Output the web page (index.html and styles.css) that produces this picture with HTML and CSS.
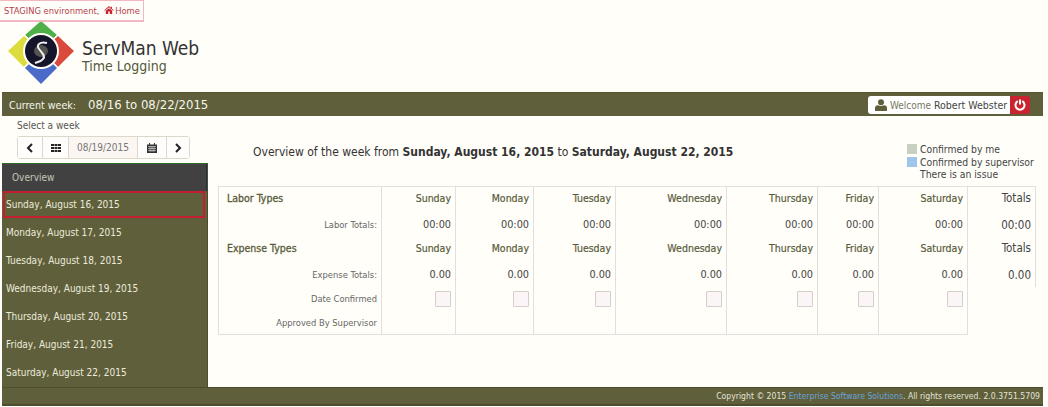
FILE: index.html
```html
<!DOCTYPE html>
<html lang="en">
<head>
<meta charset="utf-8">
<title>ServMan Web - Time Logging</title>
<link rel="stylesheet" href="styles.css">
</head>
<body>
<div class="page">
  <div class="env">STAGING environment, <svg class="home" viewBox="0 0 12 10"><path d="M6 0 0 5.200l.7.7L6 1.500l5.300 4.400.7-.7L9.700 3.300V.8H8.300v1.300zM2 6v4h3V7h2v3h3V6L6 2.700z"/></svg>Home</div>
  <header class="brand">
    <svg class="logo" viewBox="0 0 70 70">
      <g stroke="#fffef9" stroke-width="1.500">
        <path d="M35 2 52 17 35 33 18 17z" fill="#4fb04a"/>
        <path d="M69 33 52 17 35 33 52 50z" fill="#d94a3d"/>
        <path d="M1 33 18 17 35 33 18 50z" fill="#dcdc3c"/>
        <path d="M35 67 52 50 35 33 18 50z" fill="#4a6cc8"/>
      </g>
      <circle cx="35" cy="33" r="18" fill="#fffef9"/>
      <circle cx="35" cy="33" r="16" fill="#14142b"/>
      <ellipse cx="35" cy="33" rx="7" ry="6" fill="#55554f"/>
      <path d="M41 25C34 23 30 27 33 31C36 35 40 38 37 41C35 44 31 44 29 45" fill="none" stroke="#eee" stroke-width="2"/>
    </svg>
    <div class="brand-text">
      <div class="brand-name">ServMan Web</div>
      <div class="brand-sub">Time Logging</div>
    </div>
  </header>
  <div class="topbar">
    <div class="week"><span class="week-label">Current week:</span><span class="week-range">08/16 to 08/22/2015</span></div>
    <div class="user">
      <div class="welcome"><svg class="user-icon" viewBox="0 0 12 12"><circle cx="6" cy="3.200" r="3"/><path d="M0 12V9q0-2.500 3-2.800 3 1.600 6 0 3 .3 3 2.800v3z"/></svg><span>Welcome <b>Robert Webster</b></span></div>
      <div class="power"><svg viewBox="0 0 12 12"><path d="M3.800 2.200a4.500 4.500 0 1 0 4.400 0" fill="none" stroke="#fff" stroke-width="2"/><path d="M6 .5v5" stroke="#fff" stroke-width="2"/></svg></div>
    </div>
  </div>
  <div class="select-row">
    <div class="select-label">Select a week</div>
    <div class="picker">
      <span class="pbtn w25"><svg viewBox="0 0 8 10"><path d="M6 1 2 5l4 4" fill="none" stroke="#222" stroke-width="2"/></svg></span>
      <span class="pbtn w26"><svg viewBox="0 0 10 8"><path d="M0 0h3v2H0zM3.500 0h3v2h-3zM7 0h3v2H7zM0 3h3v2H0zM3.500 3h3v2h-3zM7 3h3v2H7zM0 6h3v2H0zM3.500 6h3v2h-3zM7 6h3v2H7z" fill="#222"/></svg></span>
      <span class="pdate">08/19/2015</span>
      <span class="pbtn w29"><svg viewBox="0 0 10 10"><path d="M0 1.500h10V10H0zM2 0h1v2H2zM7 0h1v2H7z" fill="#333"/><path d="M1 3.500h8M1 5.500h8M1 7.500h8M3 3v6M5 3v6M7 3v6" stroke="#fff" stroke-width=".5"/></svg></span>
      <span class="pbtn w24"><svg viewBox="0 0 8 10"><path d="m2 1 4 4-4 4" fill="none" stroke="#222" stroke-width="2"/></svg></span>
    </div>
  </div>
  <div class="main">
    <nav class="side">
      <div class="side-overview">Overview</div>
      <div class="side-item selected">Sunday, August 16, 2015</div>
      <div class="side-item">Monday, August 17, 2015</div>
      <div class="side-item">Tuesday, August 18, 2015</div>
      <div class="side-item">Wednesday, August 19, 2015</div>
      <div class="side-item">Thursday, August 20, 2015</div>
      <div class="side-item">Friday, August 21, 2015</div>
      <div class="side-item">Saturday, August 22, 2015</div>
    </nav>
    <section class="content">
      <div class="overview-head">
        <h1 class="title">Overview of the week from <b>Sunday, August 16, 2015</b> to <b>Saturday, August 22, 2015</b></h1>
        <ul class="legend">
          <li><i class="sw me"></i>Confirmed by me</li>
          <li><i class="sw sup"></i>Confirmed by supervisor</li>
          <li><i class="sw"></i>There is an issue</li>
        </ul>
      </div>
      <table class="grid">
        <colgroup><col class="c0"><col class="c1"><col class="c2"><col class="c3"><col class="c4"><col class="c5"><col class="c6"><col class="c7"><col class="c8"></colgroup>
        <tr class="head"><th class="lbl">Labor Types</th><th>Sunday</th><th>Monday</th><th>Tuesday</th><th>Wednesday</th><th>Thursday</th><th>Friday</th><th>Saturday</th><th class="tot">Totals</th></tr>
        <tr class="vals"><td class="rl">Labor Totals:</td><td>00:00</td><td>00:00</td><td>00:00</td><td>00:00</td><td>00:00</td><td>00:00</td><td>00:00</td><td class="tot big">00:00</td></tr>
        <tr class="head"><th class="lbl">Expense Types</th><th>Sunday</th><th>Monday</th><th>Tuesday</th><th>Wednesday</th><th>Thursday</th><th>Friday</th><th>Saturday</th><th class="tot">Totals</th></tr>
        <tr class="vals"><td class="rl">Expense Totals:</td><td>0.00</td><td>0.00</td><td>0.00</td><td>0.00</td><td>0.00</td><td>0.00</td><td>0.00</td><td class="tot big">0.00</td></tr>
        <tr class="check"><td class="rl">Date Confirmed</td><td><i class="box"></i></td><td><i class="box"></i></td><td><i class="box"></i></td><td><i class="box"></i></td><td><i class="box"></i></td><td><i class="box"></i></td><td><i class="box"></i></td><td class="none"></td></tr>
        <tr class="check last"><td class="rl">Approved By Supervisor</td><td></td><td></td><td></td><td></td><td></td><td></td><td></td><td class="none"></td></tr>
      </table>
    </section>
  </div>
  <footer class="foot">Copyright © 2015 <a>Enterprise Software Solutions</a>. All rights reserved. 2.0.3751.5709</footer>
</div>
</body>
</html>
```
FILE: styles.css
```css
html, body { margin: 0; padding: 0; background: #fffef9; }
body { width: 1048px; height: 407px; overflow: hidden; font-family: "DejaVu Sans Condensed", "DejaVu Sans", sans-serif; font-stretch: condensed; color: #444; font-size: 10px; }
.page { position: relative; width: 1041px; margin-left: 2px; }
.env { position: absolute; left: -2px; top: 0; box-sizing: border-box; height: 22px; width: 144px; padding: 4px 0 0 4px; border: 1px solid #f3b7bf; border-width: 1px 1px 2px 0; color: #b5404c; font-size: 9.300px; white-space: nowrap; background: #fffef9; z-index: 2; }
.home { width: 10px; height: 8px; fill: #c8202e; margin: 0 1px 0 2px; }
.brand { height: 92px; display: flex; align-items: flex-start; }
.logo { width: 70px; height: 70px; margin: 18px 0 0 4px; flex: none; }
.brand-text { margin: 38px 0 0 6px; }
.brand-name { font-size: 19px; line-height: 20px; color: #333; }
.brand-sub { font-size: 14px; line-height: 16px; color: #555a3c; }
.topbar { height: 24px; background: #5f5f3b; border-top: 1px solid #56562f; box-sizing: border-box; display: flex; justify-content: space-between; align-items: center; color: #f6f6ea; }
.week { padding-left: 7px; display: flex; align-items: center; }
.week-label { font-size: 10.600px; }
.week-range { font-size: 13px; margin-left: 12px; }
.user { display: flex; margin-right: 13px; height: 18px; }
.welcome { width: 142px; box-sizing: border-box; background: #fff; border-radius: 3px 0 0 3px; display: flex; align-items: center; padding-left: 7px; gap: 3px; color: #77775f; font-size: 10px; white-space: nowrap; }
.welcome b { color: #444; font-weight: normal; font-size: 10.500px; }
.user-icon { width: 12px; height: 12px; fill: #5f5f3b; }
.power { width: 20px; background: #c8242f; border-radius: 0 3px 3px 0; display: flex; align-items: center; justify-content: center; }
.power svg { width: 12px; height: 12px; }
.select-row { height: 47px; box-sizing: border-box; padding: 3px 0 0 15px; }
.select-label { font-size: 10px; line-height: 13px; color: #555; }
.picker { margin-top: 4px; display: flex; height: 23px; width: 173px; box-sizing: border-box; border: 1px solid #dcd8cc; border-radius: 3px; }
.pbtn { display: flex; align-items: center; justify-content: center; border-right: 1px solid #dcd8cc; box-sizing: border-box; background: #fffdfb; }
.pbtn:last-child { border-right: 0; }
.pbtn svg { width: 8px; height: 10px; }
.w25 { width: 25px; } .w26 { width: 26px; } .w29 { width: 29px; } .w24 { flex: 1; }
.w26 svg { width: 10px; height: 8px; }
.w29 svg { width: 10px; height: 10px; }
.pdate { width: 69px; box-sizing: border-box; border-right: 1px solid #dcd8cc; background: #fcf6f3; color: #777; font-size: 10px; line-height: 21px; text-align: center; }
.main { display: flex; height: 224px; }
.side { width: 206px; box-sizing: border-box; background: #5f5f3b; border-top: 1px solid #2f6b24; border-right: 1px solid #4e4e2e; color: #ecebdc; font-size: 10px; flex: none; }
.side-overview { height: 27px; line-height: 27px; background: #414141; padding-left: 10px; color: #c6c6b8; border-right: 1px solid #1f3344; box-sizing: border-box; }
.side-item { height: 28px; line-height: 28px; padding-left: 4px; box-sizing: border-box; white-space: nowrap; }
.side-item.selected { outline: 2px solid #c3202f; outline-offset: -2px; margin: 0 0 1px 1px; width: 202px; height: 27px; line-height: 27px; padding-left: 3px; }
.content { flex: 1; position: relative; padding-left: 10px; min-width: 0; }
.overview-head { height: 23px; position: relative; }
.title { margin: 0; position: absolute; left: 35px; top: -19px; white-space: nowrap; font-size: 12px; line-height: 16px; font-weight: normal; color: #333; }
.title b { font-weight: bold; color: #333; }
.legend { position: absolute; left: 689px; top: -20px; margin: 0; padding: 0; list-style: none; color: #444; font-size: 10.300px; line-height: 12.500px; white-space: nowrap; }
.legend li { display: flex; align-items: center; }
.sw { display: inline-block; width: 10px; height: 10px; margin-right: 3px; }
.sw.me { background: #c8d0c2; }
.sw.sup { background: #9fc5ea; }
.grid { border-collapse: collapse; table-layout: fixed; width: 817px; color: #555a3c; }
.c0 { width: 163px; } .c1 { width: 74px; } .c2 { width: 78px; } .c3 { width: 82px; } .c4 { width: 111px; } .c5 { width: 91px; } .c6 { width: 61px; } .c7 { width: 89px; } .c8 { width: 68px; }
.grid tr { height: 25px; }
.grid th, .grid td { padding: 0 4px 0 0; text-align: right; font-size: 10.800px; font-weight: normal; border-left: 1.500px solid #e4dfdc; white-space: nowrap; }
.grid th { -webkit-text-stroke: 0.200px #5f5f3b; font-size: 10.500px; padding-bottom: 2px; }
.grid td { color: #444; }
.grid .head:first-child th { border-top: 1.500px solid #e6dfdc; }
.grid th.lbl { text-align: left; padding-left: 8px; border-left: 1.500px solid #e4e0d8; color: #555a3c; -webkit-text-stroke: 0.300px #5f5f3b; }
.grid td.rl { color: #666; font-size: 9.300px; padding-right: 4px; border-left: 1.500px solid #e4e0d8; }
.grid .tot { color: #444; font-size: 11.500px; padding-right: 4px; border-right: 1.500px solid #e4dfdc; -webkit-text-stroke: 0; }
.grid .big { padding-top: 1px; }
.grid .none { border-left: 1.500px solid #e4dfdc; border-right: 0; }
.grid .check { height: 24px; }
.grid .last td { border-bottom: 1.500px solid #e4dfdc; }
.grid .last td.none { border-bottom: 0; }
.box { display: inline-block; width: 16px; height: 16px; box-sizing: border-box; border: 1px solid #d4cfc8; background: #fcf5f8; border-radius: 1px; vertical-align: middle; }
.foot { height: 19px; box-sizing: border-box; background: #5f5f3b; border-top: 1px solid #4e4e2e; border-bottom: 2px solid #4e4e2e; text-align: right; padding-right: 3px; line-height: 16px; color: #e4e4d8; font-size: 8.600px; }
.foot a { color: #6ba3dc; }
```
